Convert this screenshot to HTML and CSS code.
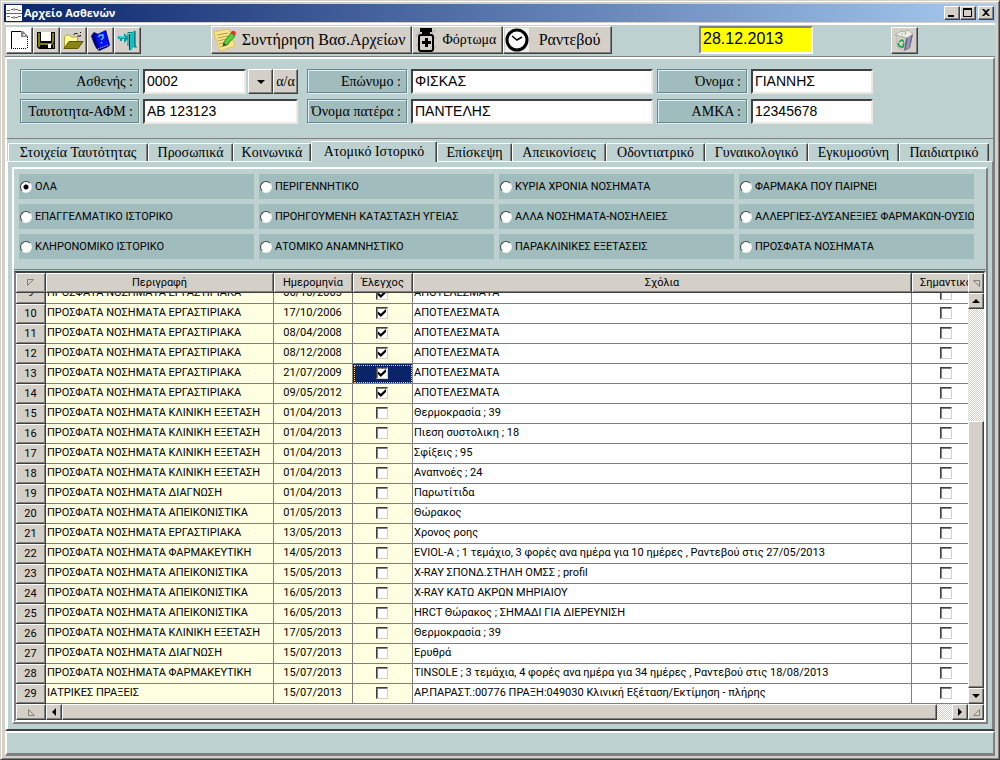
FILE: index.html
```html
<!DOCTYPE html>
<html lang="el">
<head>
<meta charset="utf-8">
<title>Αρχείο Ασθενών</title>
<link rel="stylesheet" href="styles.css">
</head>
<body>
<div class="window">
  <header class="titlebar">
    <svg class="app-icon" viewBox="0 0 16 16" aria-hidden="true"><rect width="16" height="16" fill="#fff"/><path d="M1 5.500h3M5 4.500h2M8 3v3M9 4.500h3M12 5.500h3M0 8.500h16M1 11.500h3M5 12.500h2M8 11v3M9 12.500h3M12 11.500h3" stroke="#666" fill="none" stroke-width="1"/></svg>
    <h1>Αρχείο Ασθενών</h1>
    <div class="caption-buttons">
      <button type="button" aria-label="Ελαχιστοποίηση"><svg viewBox="0 0 12 10"><path d="M2 7h6v2H2z"/></svg></button>
      <button type="button" aria-label="Μεγιστοποίηση"><svg viewBox="0 0 12 10"><path d="M1 0h9v9H1zM2 2v6h7V2z" fill-rule="evenodd"/></svg></button>
      <button type="button" class="close" aria-label="Κλείσιμο"><svg viewBox="0 0 12 10"><path d="M2 1h2l2 2 2-2h2L7 4.500l3 3.500H8L6 6 4 8H2l3-3.500z"/></svg></button>
    </div>
  </header>

  <div class="toolbar">
    <div class="tool-group">
      <button type="button" class="tool new" aria-label="Νέο"><svg viewBox="0 0 23 23"><path d="M3.500 2.500h11l5 5v12h-16z" fill="#fff"/><path d="M14 2.500H3.500v17" fill="none" stroke="#000"/><path d="M3 19.500h16M19.500 8v11" fill="none" stroke="#000" stroke-dasharray="1 1"/><path d="M13 2h2l5 5v1h-7z" fill="#888"/><path d="M15 5h2v2h-2z" fill="#ddd"/></svg></button>
      <button type="button" class="tool" aria-label="Αποθήκευση"><svg viewBox="0 0 23 23"><path d="M2 3h18v17H4l-2-2z" fill="#000"/><path d="M3 4h2v10h12V4h2v9l-2 3H3z" fill="#808000"/><path d="M6 3h10v9H6z" fill="#fff"/><path d="M13 15h3v4h-3z" fill="#fff"/><path d="M3 16h2v2H3zM18 15h1v4h-1z" fill="#808000"/></svg></button>
      <button type="button" class="tool" aria-label="Άνοιγμα"><svg viewBox="0 0 23 23"><path d="M2.500 18V8l2-2h3l2 2h6v4" fill="#ffff9c" stroke="#b8a030"/><path d="M2 19.500l5-7h14l-5 7z" fill="#8c8410" stroke="#5a5400"/><path d="M11.500 5.500l2-1h2M18 3.500h1M18.500 6v1h-3" fill="none" stroke="#000"/></svg></button>
      <button type="button" class="tool" aria-label="Βοήθεια"><svg viewBox="0 0 23 23"><path d="M2 7l3-4 4 2 8-4 4 15-2 2-9 4-3-3-2-4z" fill="#000080"/><path d="M6 6l10-4 4 13-10 4z" fill="#0010f0"/><path d="M9.500 8l1.500-2 3 0 0 3-2 2M12.500 13v1.500" fill="none" stroke="#50c8ff" stroke-width="1.500"/><path d="M9 20l10-4" stroke="#fff" stroke-dasharray="1 1"/></svg></button>
      <button type="button" class="tool" aria-label="Έξοδος"><svg viewBox="0 0 23 23"><path d="M12 17V3.500h5M14 17.500h6M18 3v15h3" fill="none" stroke="#008080"/><path d="M14 5l5-4v16l-5 5z" fill="#18bcc4"/><path d="M13.500 5v16M19 2v15" fill="none" stroke="#004848"/><path d="M2 7h6V4l5 5-5 5v-4H6v2H4v-2H2z" fill="#009c9c"/><path d="M3 8h6" stroke="#7ff"/></svg></button>
    </div>
    <div class="action-group">
      <button type="button" class="action maintenance"><svg class="note" viewBox="0 0 24 24"><path d="M1 4l15-3 6 17-15 5z" fill="#f8e58c" stroke="#e0c45c"/><path d="M4 7l11-2M5 10l10-2M5 13l8-2M6 16l7-2M7 19l9-3" stroke="#b49b47"/><path d="M18 5l4 3-8 9-4 1 1-4z" fill="#58cf3c" stroke="#278d23"/><path d="M18 4q3-3 5 1l-1 3-4-3z" fill="#ee3024"/><path d="M10 18l1-3 2 2z" fill="#333"/></svg><span>Συντήρηση Βασ.Αρχείων</span></button>
      <button type="button" class="action load"><svg class="bottle" viewBox="0 0 24 24"><path d="M2 8l4-4M2 18l3-3M18 22l4-4M18 13l4-4M17 6l4-4" stroke="#bbb" stroke-width="2"/><path d="M6 0h12v4h-2v3H8V4H6z"/><rect x="5" y="7" width="14" height="16" rx="2" fill="#d4d0c8" stroke="#000" stroke-width="2"/><path d="M11 10h3v3h3v3h-3v3h-3v-3H8v-3h3z"/></svg><span>Φόρτωμα</span></button>
      <button type="button" class="action visits"><svg class="clock" viewBox="0 0 24 24"><rect width="24" height="24" fill="#eee"/><circle cx="12" cy="12" r="10" fill="#fff" stroke="#000" stroke-width="3"/><path d="M7 8l5 4 5-3" fill="none" stroke="#000" stroke-width="1.500"/></svg><span>Ραντεβού</span></button>
    </div>
    <input class="date" type="text" value="28.12.2013" aria-label="Ημερομηνία">
    <button type="button" class="tool bin" aria-label="Διαγραφή"><svg viewBox="0 0 23 23"><path d="M3 6l9-3 8 2-3 14-7 3-6-4z" fill="#aaa"/><path d="M3 6l10 3-2 13-6-4z" fill="#cfd1c9"/><path d="M13 9l7-4-3 14-6 3z" fill="#6c6896"/><path d="M15 9l3-2-2 12-3 1z" fill="#9a97b4"/><path d="M2 6l6-4 3 1 4-2 5 4-6 4z" fill="#eeeee4" stroke="#aaa"/><path d="M8 4l2 2M13 3l-1 3" stroke="#b0b070"/><path d="M6 13l3-2 2 2M5 14l1 3 2 1M11 14l-1 4-2 0" fill="none" stroke="#13a044" stroke-width="1.500"/></svg></button>
  </div>

  <main class="record">
    <form class="patient">
      <label class="caption" for="pid">Ασθενής :</label>
      <div class="code"><input id="pid" type="text" value="0002"><button type="button" aria-label="Λίστα ασθενών"><svg viewBox="0 0 8 4"><path d="M0 0h8L4 4z"/></svg></button><button type="button">α/α</button></div>
      <label class="caption second" for="surname">Επώνυμο :</label>
      <input id="surname" type="text" value="ΦΙΣΚΑΣ">
      <label class="caption" for="name">Όνομα :</label>
      <input id="name" type="text" value="ΓΙΑΝΝΗΣ">
      <label class="caption" for="idno">Ταυτοτητα-ΑΦΜ :</label>
      <input id="idno" type="text" value="ΑΒ 123123">
      <label class="caption second" for="father">Όνομα πατέρα :</label>
      <input id="father" type="text" value="ΠΑΝΤΕΛΗΣ">
      <label class="caption" for="amka">ΑΜΚΑ :</label>
      <input id="amka" type="text" value="12345678">
    </form>

    <nav class="tabs" role="tablist">
      <button type="button" role="tab">Στοιχεία Ταυτότητας</button>
      <button type="button" role="tab">Προσωπικά</button>
      <button type="button" role="tab">Κοινωνικά</button>
      <button type="button" role="tab" class="active" aria-selected="true">Ατομικό Ιστορικό</button>
      <button type="button" role="tab">Επίσκεψη</button>
      <button type="button" role="tab">Απεικονίσεις</button>
      <button type="button" role="tab">Οδοντιατρικό</button>
      <button type="button" role="tab">Γυναικολογικό</button>
      <button type="button" role="tab">Εγκυμοσύνη</button>
      <button type="button" role="tab">Παιδιατρικό</button>
    </nav>

    <section class="pane">
      <div class="panel">
        <div class="filters" role="radiogroup" aria-label="Κατηγορία ιστορικού">
          <label><input type="radio" name="cat" checked>ΟΛΑ</label>
          <label><input type="radio" name="cat">ΠΕΡΙΓΕΝΝΗΤΙΚΟ</label>
          <label><input type="radio" name="cat">ΚΥΡΙΑ ΧΡΟΝΙΑ ΝΟΣΗΜΑΤΑ</label>
          <label><input type="radio" name="cat">ΦΑΡΜΑΚΑ ΠΟΥ ΠΑΙΡΝΕΙ</label>
          <label><input type="radio" name="cat">ΕΠΑΓΓΕΛΜΑΤΙΚΟ ΙΣΤΟΡΙΚΟ</label>
          <label><input type="radio" name="cat">ΠΡΟΗΓΟΥΜΕΝΗ ΚΑΤΑΣΤΑΣΗ ΥΓΕΙΑΣ</label>
          <label><input type="radio" name="cat">ΑΛΛΑ ΝΟΣΗΜΑΤΑ-ΝΟΣΗΛΕΙΕΣ</label>
          <label><input type="radio" name="cat">ΑΛΛΕΡΓΙΕΣ-ΔΥΣΑΝΕΞΙΕΣ ΦΑΡΜΑΚΩΝ-ΟΥΣΙΩΝ</label>
          <label><input type="radio" name="cat">ΚΛΗΡΟΝΟΜΙΚΟ ΙΣΤΟΡΙΚΟ</label>
          <label><input type="radio" name="cat">ΑΤΟΜΙΚΟ ΑΝΑΜΝΗΣΤΙΚΟ</label>
          <label><input type="radio" name="cat">ΠΑΡΑΚΛΙΝΙΚΕΣ ΕΞΕΤΑΣΕΙΣ</label>
          <label><input type="radio" name="cat">ΠΡΟΣΦΑΤΑ ΝΟΣΗΜΑΤΑ</label>
        </div>

        <div class="grid">
          <div class="grid-top">
            <div class="viewport">
              <table>
                <colgroup><col class="c-num"><col class="c-desc"><col class="c-date"><col class="c-check"><col><col class="c-flag"></colgroup>
                <thead><tr><th aria-label="Αριθμός"><svg class="mark" viewBox="0 0 7 7"><path d="M.5.5h6l-6 6z"/></svg></th><th>Περιγραφή</th><th>Ημερομηνία</th><th>Έλεγχος</th><th>Σχόλια</th><th>Σημαντικό</th></tr></thead>
                <tbody>
                  <tr class="cut"><th><div>9</div></th><td><div>ΠΡΟΣΦΑΤΑ ΝΟΣΗΜΑΤΑ ΕΡΓΑΣΤΙΡΙΑΚΑ</div></td><td><div>06/10/2005</div></td><td><div><input type="checkbox" aria-label="Έλεγχος 9" checked></div></td><td><div>ΑΠΟΤΕΛΕΣΜΑΤΑ</div></td><td><div><input type="checkbox" aria-label="Σημαντικό 9"></div></td></tr>
                  <tr><th>10</th><td>ΠΡΟΣΦΑΤΑ ΝΟΣΗΜΑΤΑ ΕΡΓΑΣΤΙΡΙΑΚΑ</td><td>17/10/2006</td><td><input type="checkbox" aria-label="Έλεγχος 10" checked></td><td>ΑΠΟΤΕΛΕΣΜΑΤΑ</td><td><input type="checkbox" aria-label="Σημαντικό 10"></td></tr>
                  <tr><th>11</th><td>ΠΡΟΣΦΑΤΑ ΝΟΣΗΜΑΤΑ ΕΡΓΑΣΤΙΡΙΑΚΑ</td><td>08/04/2008</td><td><input type="checkbox" aria-label="Έλεγχος 11" checked></td><td>ΑΠΟΤΕΛΕΣΜΑΤΑ</td><td><input type="checkbox" aria-label="Σημαντικό 11"></td></tr>
                  <tr><th>12</th><td>ΠΡΟΣΦΑΤΑ ΝΟΣΗΜΑΤΑ ΕΡΓΑΣΤΙΡΙΑΚΑ</td><td>08/12/2008</td><td><input type="checkbox" aria-label="Έλεγχος 12" checked></td><td>ΑΠΟΤΕΛΕΣΜΑΤΑ</td><td><input type="checkbox" aria-label="Σημαντικό 12"></td></tr>
                  <tr><th>13</th><td>ΠΡΟΣΦΑΤΑ ΝΟΣΗΜΑΤΑ ΕΡΓΑΣΤΙΡΙΑΚΑ</td><td>21/07/2009</td><td class="selected"><input type="checkbox" aria-label="Έλεγχος 13" checked></td><td>ΑΠΟΤΕΛΕΣΜΑΤΑ</td><td><input type="checkbox" aria-label="Σημαντικό 13"></td></tr>
                  <tr><th>14</th><td>ΠΡΟΣΦΑΤΑ ΝΟΣΗΜΑΤΑ ΕΡΓΑΣΤΙΡΙΑΚΑ</td><td>09/05/2012</td><td><input type="checkbox" aria-label="Έλεγχος 14" checked></td><td>ΑΠΟΤΕΛΕΣΜΑΤΑ</td><td><input type="checkbox" aria-label="Σημαντικό 14"></td></tr>
                  <tr><th>15</th><td>ΠΡΟΣΦΑΤΑ ΝΟΣΗΜΑΤΑ ΚΛΙΝΙΚΗ ΕΞΕΤΑΣΗ</td><td>01/04/2013</td><td><input type="checkbox" aria-label="Έλεγχος 15"></td><td>Θερμοκρασία ; 39</td><td><input type="checkbox" aria-label="Σημαντικό 15"></td></tr>
                  <tr><th>16</th><td>ΠΡΟΣΦΑΤΑ ΝΟΣΗΜΑΤΑ ΚΛΙΝΙΚΗ ΕΞΕΤΑΣΗ</td><td>01/04/2013</td><td><input type="checkbox" aria-label="Έλεγχος 16"></td><td>Πιεση συστολικη ; 18</td><td><input type="checkbox" aria-label="Σημαντικό 16"></td></tr>
                  <tr><th>17</th><td>ΠΡΟΣΦΑΤΑ ΝΟΣΗΜΑΤΑ ΚΛΙΝΙΚΗ ΕΞΕΤΑΣΗ</td><td>01/04/2013</td><td><input type="checkbox" aria-label="Έλεγχος 17"></td><td>Σφίξεις ; 95</td><td><input type="checkbox" aria-label="Σημαντικό 17"></td></tr>
                  <tr><th>18</th><td>ΠΡΟΣΦΑΤΑ ΝΟΣΗΜΑΤΑ ΚΛΙΝΙΚΗ ΕΞΕΤΑΣΗ</td><td>01/04/2013</td><td><input type="checkbox" aria-label="Έλεγχος 18"></td><td>Αναπνοές ; 24</td><td><input type="checkbox" aria-label="Σημαντικό 18"></td></tr>
                  <tr><th>19</th><td>ΠΡΟΣΦΑΤΑ ΝΟΣΗΜΑΤΑ ΔΙΑΓΝΩΣΗ</td><td>01/04/2013</td><td><input type="checkbox" aria-label="Έλεγχος 19"></td><td>Παρωτίτιδα</td><td><input type="checkbox" aria-label="Σημαντικό 19"></td></tr>
                  <tr><th>20</th><td>ΠΡΟΣΦΑΤΑ ΝΟΣΗΜΑΤΑ ΑΠΕΙΚΟΝΙΣΤΙΚΑ</td><td>01/05/2013</td><td><input type="checkbox" aria-label="Έλεγχος 20"></td><td>Θώρακος</td><td><input type="checkbox" aria-label="Σημαντικό 20"></td></tr>
                  <tr><th>21</th><td>ΠΡΟΣΦΑΤΑ ΝΟΣΗΜΑΤΑ ΕΡΓΑΣΤΙΡΙΑΚΑ</td><td>13/05/2013</td><td><input type="checkbox" aria-label="Έλεγχος 21"></td><td>Χρονος ροης</td><td><input type="checkbox" aria-label="Σημαντικό 21"></td></tr>
                  <tr><th>22</th><td>ΠΡΟΣΦΑΤΑ ΝΟΣΗΜΑΤΑ ΦΑΡΜΑΚΕΥΤΙΚΗ</td><td>14/05/2013</td><td><input type="checkbox" aria-label="Έλεγχος 22"></td><td>EVIOL-A ; 1 τεμάχιο, 3 φορές ανα ημέρα για 10 ημέρες , Ραντεβού στις 27/05/2013</td><td><input type="checkbox" aria-label="Σημαντικό 22"></td></tr>
                  <tr><th>23</th><td>ΠΡΟΣΦΑΤΑ ΝΟΣΗΜΑΤΑ ΑΠΕΙΚΟΝΙΣΤΙΚΑ</td><td>15/05/2013</td><td><input type="checkbox" aria-label="Έλεγχος 23"></td><td>X-RAY ΣΠΟΝΔ.ΣΤΗΛΗ ΟΜΣΣ ; profil</td><td><input type="checkbox" aria-label="Σημαντικό 23"></td></tr>
                  <tr><th>24</th><td>ΠΡΟΣΦΑΤΑ ΝΟΣΗΜΑΤΑ ΑΠΕΙΚΟΝΙΣΤΙΚΑ</td><td>16/05/2013</td><td><input type="checkbox" aria-label="Έλεγχος 24"></td><td>X-RAY ΚΑΤΩ ΑΚΡΩΝ ΜΗΡΙΑΙΟΥ</td><td><input type="checkbox" aria-label="Σημαντικό 24"></td></tr>
                  <tr><th>25</th><td>ΠΡΟΣΦΑΤΑ ΝΟΣΗΜΑΤΑ ΑΠΕΙΚΟΝΙΣΤΙΚΑ</td><td>16/05/2013</td><td><input type="checkbox" aria-label="Έλεγχος 25"></td><td>HRCT Θώρακος ; ΣΗΜΑΔΙ ΓΙΑ ΔΙΕΡΕΥΝΙΣΗ</td><td><input type="checkbox" aria-label="Σημαντικό 25"></td></tr>
                  <tr><th>26</th><td>ΠΡΟΣΦΑΤΑ ΝΟΣΗΜΑΤΑ ΚΛΙΝΙΚΗ ΕΞΕΤΑΣΗ</td><td>17/05/2013</td><td><input type="checkbox" aria-label="Έλεγχος 26"></td><td>Θερμοκρασία ; 39</td><td><input type="checkbox" aria-label="Σημαντικό 26"></td></tr>
                  <tr><th>27</th><td>ΠΡΟΣΦΑΤΑ ΝΟΣΗΜΑΤΑ ΔΙΑΓΝΩΣΗ</td><td>15/07/2013</td><td><input type="checkbox" aria-label="Έλεγχος 27"></td><td>Ερυθρά</td><td><input type="checkbox" aria-label="Σημαντικό 27"></td></tr>
                  <tr><th>28</th><td>ΠΡΟΣΦΑΤΑ ΝΟΣΗΜΑΤΑ ΦΑΡΜΑΚΕΥΤΙΚΗ</td><td>15/07/2013</td><td><input type="checkbox" aria-label="Έλεγχος 28"></td><td>TINSOLE ; 3 τεμάχια, 4 φορές ανα ημέρα για 34 ημέρες , Ραντεβού στις 18/08/2013</td><td><input type="checkbox" aria-label="Σημαντικό 28"></td></tr>
                  <tr><th>29</th><td>ΙΑΤΡΙΚΕΣ ΠΡΑΞΕΙΣ</td><td>15/07/2013</td><td><input type="checkbox" aria-label="Έλεγχος 29"></td><td>ΑΡ.ΠΑΡΑΣΤ.:00776 ΠΡΑΞΗ:049030 Κλινική Εξέταση/Εκτίμηση - πλήρης</td><td><input type="checkbox" aria-label="Σημαντικό 29"></td></tr>
                </tbody>
              </table>
            </div>
            <div class="vscroll">
              <button type="button" class="head" aria-label="Στήλες"><svg class="mark" viewBox="0 0 7 7"><path d="M.5.5h6v6z"/></svg></button>
              <button type="button" aria-label="Πάνω"><svg viewBox="0 0 8 8"><path d="M0 6h8L4 2z"/></svg></button>
              <div class="track"></div>
              <div class="thumb"></div>
              <button type="button" aria-label="Κάτω"><svg viewBox="0 0 8 8"><path d="M0 2h8L4 6z"/></svg></button>
            </div>
          </div>
          <div class="hscroll">
            <button type="button" class="corner" aria-label="Αρχή"><svg class="mark" viewBox="0 0 7 7"><path d="M.5.5v6h6z"/></svg></button>
            <button type="button" aria-label="Αριστερά"><svg viewBox="0 0 8 8"><path d="M6 0v8L2 4z"/></svg></button>
            <div class="thumb"></div>
            <div class="track"></div>
            <button type="button" aria-label="Δεξιά"><svg viewBox="0 0 8 8"><path d="M2 0v8l4-4z"/></svg></button>
            <button type="button" aria-label="Τέλος"><svg class="mark" viewBox="0 0 7 7"><path d="M6.500.5v6h-6z"/></svg></button>
          </div>
        </div>
      </div>
    </section>
  </main>
  <footer class="status"></footer>
</div>
</body>
</html>
```
FILE: styles.css
```css
:root {
  --face: #d4d0c8;
  --teal: #bdd1d0;
  --teal-dark: #a0bcbc;
  --dark: #404040;
  --shade: #808080;
  --serif: "Liberation Serif", serif;
  --sans: "Liberation Sans", sans-serif;
  --ui: Roboto, sans-serif;
}
* { box-sizing: border-box; }
body { margin: 0; background: var(--face); color: #000; }
button, input { margin: 0; font: inherit; color: inherit; border-radius: 0; }
button { padding: 0; background: var(--face); }
svg { display: block; flex: none; }

.window {
  min-height: 100vh;
  display: flex;
  flex-direction: column;
  padding: 2px;
  border: 1px solid;
  border-color: var(--face) var(--dark) var(--dark) var(--face);
  box-shadow: inset 1px 1px #fff, inset -1px -1px var(--shade);
  background: var(--face);
}
.titlebar {
  display: flex;
  align-items: center;
  gap: 2px;
  height: 19px;
  margin: 1px 1px 0;
  padding: 0 2px;
  border-bottom: 1px solid var(--face);
  background: linear-gradient(90deg, #0a246a, #a6caf0);
}
.app-icon { width: 16px; height: 16px; }
h1 { margin: 0; flex: 1; font: bold 11px/16px "Open Sans", sans-serif; color: #fff; }
.caption-buttons { display: flex; }
.caption-buttons button,
.tool, .action, .code button, .vscroll button, .hscroll button, .thumb {
  display: flex;
  align-items: center;
  justify-content: center;
  border: 1px solid;
  border-color: #fff var(--dark) var(--dark) #fff;
  box-shadow: inset -1px -1px var(--shade);
}
.caption-buttons button { width: 16px; height: 14px; }
.caption-buttons .close { margin-left: 2px; }
.caption-buttons svg { width: 12px; height: 10px; }

.toolbar {
  display: flex;
  align-items: center;
  height: 34px;
  margin: 0 2px;
  padding: 1px 77px 2px 1px;
  border-top: 2px solid #fff;
  border-bottom: 1px solid var(--shade);
  background: var(--teal);
}
.tool-group { display: flex; }
.tool { width: 27px; height: 27px; }
.tool.new { background: #fff; }
.tool svg { width: 23px; height: 23px; }
.action-group { display: flex; margin-left: 70px; font: 16px/24px var(--serif); }
.action { height: 28px; gap: 2px; padding: 0 3px 0 1px; justify-content: flex-start; }
.action span { flex: 1; white-space: nowrap; }
.action svg { width: 24px; height: 24px; }
.maintenance { width: 201px; }
.load { width: 91px; font-size: 14px; }
.visits { width: 109px; }
.date {
  width: 114px;
  height: 28px;
  margin: 0 auto 0 87px;
  padding: 0 2px 2px;
  border: 2px solid;
  border-color: var(--shade) #fff #fff var(--shade);
  background: #ff0;
  font: 16px/20px var(--sans);
}

.record {
  flex: 1;
  display: flex;
  flex-direction: column;
  margin: 0 2px;
  border: 2px solid;
  border-color: #fff var(--shade) var(--dark) #fff;
  background: var(--teal);
}
.patient {
  display: grid;
  grid-template-columns: 119px 155px 105px 1fr 90px 122px;
  gap: 5px 4px;
  padding: 10px 120px 14px 13px;
  border-bottom: 1px solid var(--shade);
}
.caption {
  height: 24px;
  padding: 0 5px 0 0;
  border: 1px solid #6b8687;
  box-shadow: inset 1px 1px #def, 1px 1px #def;
  background: var(--teal-dark);
  font: 14px/24px var(--serif);
  text-align: right;
  white-space: nowrap;
}
.caption.second { margin-left: 5px; }
.patient input {
  width: 100%;
  min-width: 0;
  height: 25px;
  padding: 0 2px 2px;
  border: 2px solid;
  border-color: var(--dark) #ece9e2 #ece9e2 var(--dark);
  background: #fff;
  font: 14px/18px var(--sans);
}
.code { display: flex; }
.code input { flex: 1; margin-right: 2px; }
.code button { width: 25px; height: 25px; font: 14px/20px var(--serif); }
.code svg { width: 8px; height: 4px; }

.tabs {
  display: grid;
  grid-template-columns: 140fr 85fr 78fr 126fr 75fr 94fr 99fr 103fr 91fr 90fr;
  align-items: end;
  margin: 2px 4px 0 1px;
  font: 14px/18px var(--serif);
}
.tabs button {
  height: 18px;
  overflow: hidden;
  border: 1px solid;
  border-color: #fff var(--dark) transparent #fff;
  border-bottom: 0;
  border-radius: 2px 2px 0 0;
  box-shadow: inset -1px 0 var(--shade);
  background: var(--teal);
  white-space: nowrap;
}
.tabs .active {
  z-index: 1;
  height: 21px;
  margin-bottom: -1px;
  padding-bottom: 1px;
}
.pane {
  flex: 1;
  display: flex;
  padding: 5px 4px 5px 4px;
  border: 1px solid;
  border-color: #fff var(--shade) transparent #fff;
  border-bottom: 0;
}
.panel {
  flex: 1;
  min-width: 0;
  display: flex;
  flex-direction: column;
  border: 2px solid;
  border-color: #fff var(--shade) var(--shade) #fff;
}
.filters {
  display: grid;
  grid-template-columns: repeat(4, minmax(0, 1fr));
  gap: 5px;
  padding: 5px 12px 10px 5px;
  border-bottom: 1px solid var(--shade);
  font: 11px/25px var(--ui);
}
.filters label {
  display: flex;
  align-items: center;
  gap: 3px;
  height: 25px;
  padding-left: 1px;
  overflow: hidden;
  background: var(--teal-dark);
  white-space: nowrap;
}
.filters input {
  appearance: none;
  flex: none;
  width: 12px;
  height: 12px;
  border: 1px solid;
  border-color: var(--dark) #eee #eee var(--dark);
  border-radius: 50%;
  background: #fff;
}
.filters input:checked { background: radial-gradient(circle, #000 2px, #fff 3px); }

.grid {
  flex: 1;
  display: flex;
  flex-direction: column;
  margin-top: 1px;
  border: 2px solid;
  border-color: var(--dark) #fff #fff var(--shade);
  background: #fff;
  font: 11px/14px var(--ui);
}
.grid-top { flex: 1; display: flex; }
.viewport { flex: 1; min-width: 0; overflow: hidden; }
table {
  width: calc(100% + 13px);
  table-layout: fixed;
  border-collapse: separate;
  border-spacing: 0;
}
.c-num { width: 30px; }
.c-desc { width: 228px; }
.c-date { width: 79px; }
.c-check { width: 60px; }
.c-flag { width: 69px; }
th, td {
  height: 20px;
  padding: 0 2px 1px 1px;
  overflow: hidden;
  border-right: 1px solid var(--shade);
  border-bottom: 1px solid var(--shade);
  font-weight: normal;
  text-align: left;
  white-space: nowrap;
}
th {
  padding: 0;
  border-color: var(--dark);
  box-shadow: inset 1px 1px #fff, inset -1px -1px var(--shade);
  background: var(--face);
  text-align: center;
}
td:nth-child(-n+4) { background: #ffffe1; }
td:nth-child(3), td:nth-child(4), td:nth-child(6) { text-align: center; }
td input {
  appearance: none;
  display: block;
  width: 12px;
  height: 12px;
  margin: 0 auto;
  border: 1px solid;
  border-color: var(--dark) var(--face) var(--face) var(--dark);
  box-shadow: inset 1px 1px var(--shade);
  background: #fff;
}
td input:checked::before {
  content: "";
  display: block;
  width: 8px;
  height: 8px;
  margin: 1px;
  background: #000;
  clip-path: polygon(0 30%, 35% 60%, 100% 0, 100% 36%, 35% 100%, 0 66%);
}
td.selected {
  background: #0a246a;
  outline: 1px dotted #ffd080;
  outline-offset: -2px;
}
.cut th, .cut td { height: 11px; padding-top: 0; padding-bottom: 0; }
.cut th { box-shadow: inset 1px 0 #fff, inset -1px -1px var(--shade); }
.cut div {
  display: flex;
  align-items: flex-end;
  height: 10px;
  padding-bottom: 3px;
  overflow: hidden;
}
.cut th div, .cut td:nth-child(3) div { justify-content: center; }
.mark { width: 7px; height: 7px; margin: 0 auto; fill: none; stroke: var(--shade); }

.vscroll { display: flex; flex-direction: column; width: 16px; }
.vscroll button { width: 16px; height: 16px; }
.vscroll .head { height: 20px; }
.vscroll .track { flex: 112; }
.vscroll .thumb { flex: 266; }
.hscroll { display: flex; height: 16px; }
.hscroll button { width: 16px; height: 16px; }
.hscroll .corner { width: 30px; }
.hscroll .thumb { flex: 875; }
.hscroll .track { flex: 15; }
.thumb { background: var(--face); }
.track { background: repeating-conic-gradient(#fff 0 25%, var(--face) 0 50%) 0 0 / 2px 2px; }
.vscroll svg:not(.mark), .hscroll svg:not(.mark) { width: 8px; height: 8px; }

.status {
  height: 25px;
  margin: 0 2px 1px;
  border: 2px solid;
  border-color: #fff var(--shade) var(--shade) #fff;
  border-bottom-width: 3px;
  background: var(--teal);
}
```
